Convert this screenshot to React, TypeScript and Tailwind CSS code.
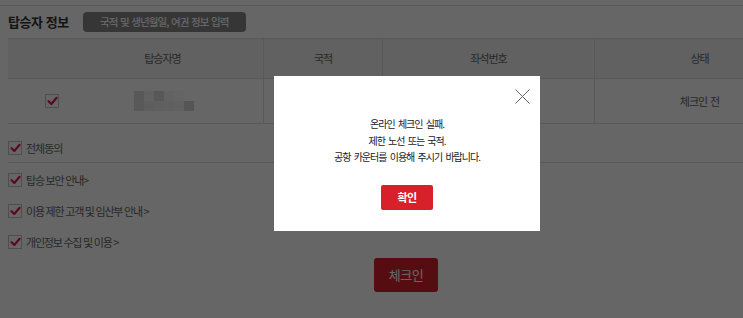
import React from "react";

const FONT = { fontFamily: '"Noto Sans CJK KR", "Noto Sans", sans-serif' };

function Check() {
  return (
    <span className="flex h-[14px] w-[14px] shrink-0 items-center justify-center border border-[#c4c4c4] bg-white">
      <svg width="11" height="10" viewBox="0 0 11 10" fill="none">
        <path d="M1.5 5.2 L4.3 8 L9.6 1.8" stroke="#e3104c" strokeWidth="2.1" strokeLinecap="round" strokeLinejoin="round" />
      </svg>
    </span>
  );
}

const pixels = [
  ["#dcdcdc", "#f3f3f3", "#dadada", "#f6f6f6", "#fafafa", "#ffffff"],
  ["#dedede", "#ebebeb", "#eeeeee", "#efefef", "#f2f2f2", "#d4d4d4"],
];

export default function App() {
  const cols = "grid grid-cols-[54px_201px_119px_212px_210px]";
  return (
    <div className="relative h-[318px] w-[743px] overflow-hidden bg-white" style={FONT}>
      <div className="h-[6px] border-b border-[#dcdcdc]" />
      <div className="flex h-[32px] items-center gap-[14px] pl-[8px]">
        <span className="text-[13px] font-bold tracking-[-0.5px] text-[#333] [word-spacing:1px]">탑승자 정보</span>
        <span className="flex h-[20px] w-[163px] items-center justify-center rounded-[4px] bg-[#888] text-[10.5px] font-medium tracking-[-0.9px] text-white [word-spacing:1px]">
          국적 및 생년월일, 여권 정보 입력
        </span>
      </div>
      <div className="w-[804px] pl-[8px]">
        <div className="border-t border-[#dcdcdc]">
          <div className={`${cols} h-[40px] border-b border-[#dcdcdc] bg-[#f3f3f3] text-[11px] tracking-[-1px] text-[#666]`}>
            <div />
            <div className="flex items-center justify-center">탑승자명</div>
            <div className="flex items-center justify-center border-l border-[#dcdcdc]">국적</div>
            <div className="flex items-center justify-center border-l border-[#dcdcdc]">좌석번호</div>
            <div className="flex items-center justify-center border-l border-[#dcdcdc]">상태</div>
          </div>
          <div className={`${cols} h-[45px] border-b border-[#dcdcdc] text-[11px] tracking-[-1px] text-[#666] [word-spacing:1.5px]`}>
            <div className="flex items-center pl-[37px]">
              <Check />
            </div>
            <div className="flex items-center pl-[72px]">
              <div className="flex flex-col">
                {pixels.map((row, i) => (
                  <div key={i} className="flex">
                    {row.map((c, j) => (
                      <span key={j} className="h-[10px] w-[10px]" style={{ background: c }} />
                    ))}
                  </div>
                ))}
              </div>
            </div>
            <div className="border-l border-[#dcdcdc]" />
            <div className="border-l border-[#dcdcdc]" />
            <div className="flex items-center justify-center border-l border-[#dcdcdc]">체크인 전</div>
          </div>
        </div>
        <div className="flex items-center gap-[4px] border-b border-[#dcdcdc] pb-[7px] pt-[17px] text-[11px] tracking-[-1px] text-[#666]">
          <Check />
          <span className="leading-[14px]">전체동의</span>
        </div>
        <div className="mt-[10px] flex flex-col gap-[17px] text-[11px] tracking-[-1.2px] text-[#666] [word-spacing:0.5px]">
          {["탑승 보안 안내>", "이용 제한 고객 및 임산부 안내 >", "개인정보 수집 및 이용 >"].map((t) => (
            <div key={t} className="flex h-[14px] items-center gap-[4px]">
              <Check />
              <span className="leading-[14px]">{t}</span>
            </div>
          ))}
        </div>
        <div className="mt-[9px] flex justify-center">
          <button className="flex h-[34px] w-[64px] items-center justify-center rounded-[3px] bg-[#d8222c] text-[13px] tracking-[-0.5px] text-white">
            체크인
          </button>
        </div>
      </div>

      <div className="absolute inset-0 bg-black/60" />

      <div className="absolute left-[274px] top-[76px] h-[155px] w-[266px] bg-white">
        <svg className="absolute left-[241px] top-[13px]" width="15" height="15" viewBox="0 0 15 15">
          <path d="M0.5 0.5 L14.5 14.5 M14.5 0.5 L0.5 14.5" stroke="#666" strokeWidth="1" />
        </svg>
        <div className="flex flex-col items-center pt-[40px]">
          <div className="text-center text-[10px] leading-[16.5px] tracking-[-1px] text-[#222] [word-spacing:2px]">
            <div>온라인 체크인 실패.</div>
            <div>제한 노선 또는 국적.</div>
            <div>공항 카운터를 이용해 주시기 바랍니다.</div>
          </div>
          <button className="mt-[19px] flex h-[25px] w-[52px] items-center justify-center rounded-[2px] bg-[#d7202a] text-[11px] font-bold tracking-[-0.5px] text-white">
            확인
          </button>
        </div>
      </div>
    </div>
  );
}
